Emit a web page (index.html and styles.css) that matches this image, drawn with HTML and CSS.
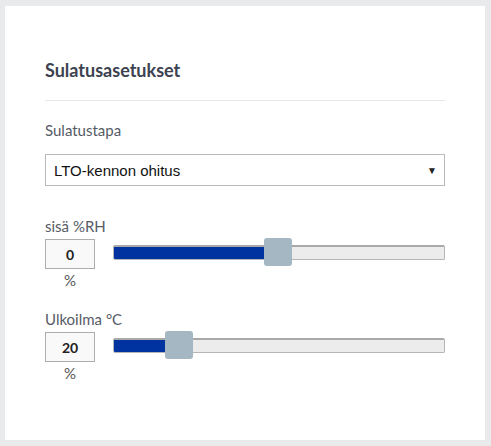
FILE: index.html
```html
<!DOCTYPE html>
<html>
<head>
<meta charset="utf-8">
<link rel="stylesheet" href="styles.css">
</head>
<body>
<div class="card">
  <h2 class="title">Sulatusasetukset</h2>
  <div class="field">
    <div class="label">Sulatustapa</div>
    <div class="select"><span>LTO-kennon ohitus</span><span class="arrow">▼</span></div>
  </div>
  <div class="field slider-field">
    <div class="label">sisä %RH</div>
    <div class="row">
      <div class="numcol">
        <div class="num">0</div>
        <div class="unit">%</div>
      </div>
      <div class="slider">
        <div class="track"><div class="fill" style="width:46%"></div></div>
        <div class="thumb" style="left:151px"></div>
      </div>
    </div>
  </div>
  <div class="field slider-field second">
    <div class="label">Ulkoilma °C</div>
    <div class="row">
      <div class="numcol">
        <div class="num">20</div>
        <div class="unit">%</div>
      </div>
      <div class="slider">
        <div class="track"><div class="fill" style="width:16%"></div></div>
        <div class="thumb" style="left:52px"></div>
      </div>
    </div>
  </div>
</div>
</body>
</html>
```
FILE: styles.css
```css
html, body {
  margin: 0;
  padding: 0;
  background: #e9eaec;
  font-family: Lato, "Noto Sans", sans-serif;
}
.card {
  background: #fff;
  margin: 6px 6px 0 5px;
  height: 434px;
  box-sizing: border-box;
  padding: 53px 40px 0 40px;
}
.title {
  margin: 0;
  font-size: 18px;
  font-weight: 700;
  line-height: 22px;
  color: #3d4250;
  padding-bottom: 19px;
  border-bottom: 1px solid #e6e6e6;
}
.field {
  margin-top: 19px;
}
.label {
  font-size: 15px;
  line-height: 20px;
  color: #565b66;
}
.select {
  margin-top: 14px;
  height: 32px;
  box-sizing: border-box;
  border: 1px solid #b9b9b9;
  display: flex;
  align-items: center;
  justify-content: space-between;
  padding: 0 7px 0 8px;
  font-family: "Liberation Sans", Arial, sans-serif;
  font-size: 15px;
  color: #111;
}
.arrow {
  font-size: 10px;
  color: #222;
}
.slider-field {
  margin-top: 30px;
}
.slider-field.second {
  margin-top: 19px;
}
.row {
  display: flex;
  align-items: flex-start;
  gap: 18px;
  margin-top: 3px;
}
.numcol {
  width: 50px;
  display: flex;
  flex-direction: column;
  align-items: center;
}
.num {
  width: 50px;
  height: 30px;
  box-sizing: border-box;
  border: 1px solid #adadad;
  background: #f9f9f9;
  display: flex;
  align-items: center;
  justify-content: center;
  font-size: 14px;
  font-weight: 700;
  color: #222;
}
.unit {
  font-size: 15px;
  line-height: 20px;
  color: #555;
  margin-top: 1px;
}
.slider {
  flex: 1;
  position: relative;
  height: 28px;
  margin-top: -1px;
}
.track {
  position: absolute;
  left: 0;
  right: 0;
  top: 7px;
  height: 15px;
  box-sizing: border-box;
  border: 1px solid #b5b5b5;
  border-top: 2px solid #a9a9a9;
  background: #ececec;
  border-radius: 2px;
  overflow: hidden;
}
.fill {
  height: 100%;
  background: #0033a0;
}
.thumb {
  position: absolute;
  top: 0;
  width: 28px;
  height: 28px;
  background: #a5b7c2;
  border-radius: 3px;
}
```
